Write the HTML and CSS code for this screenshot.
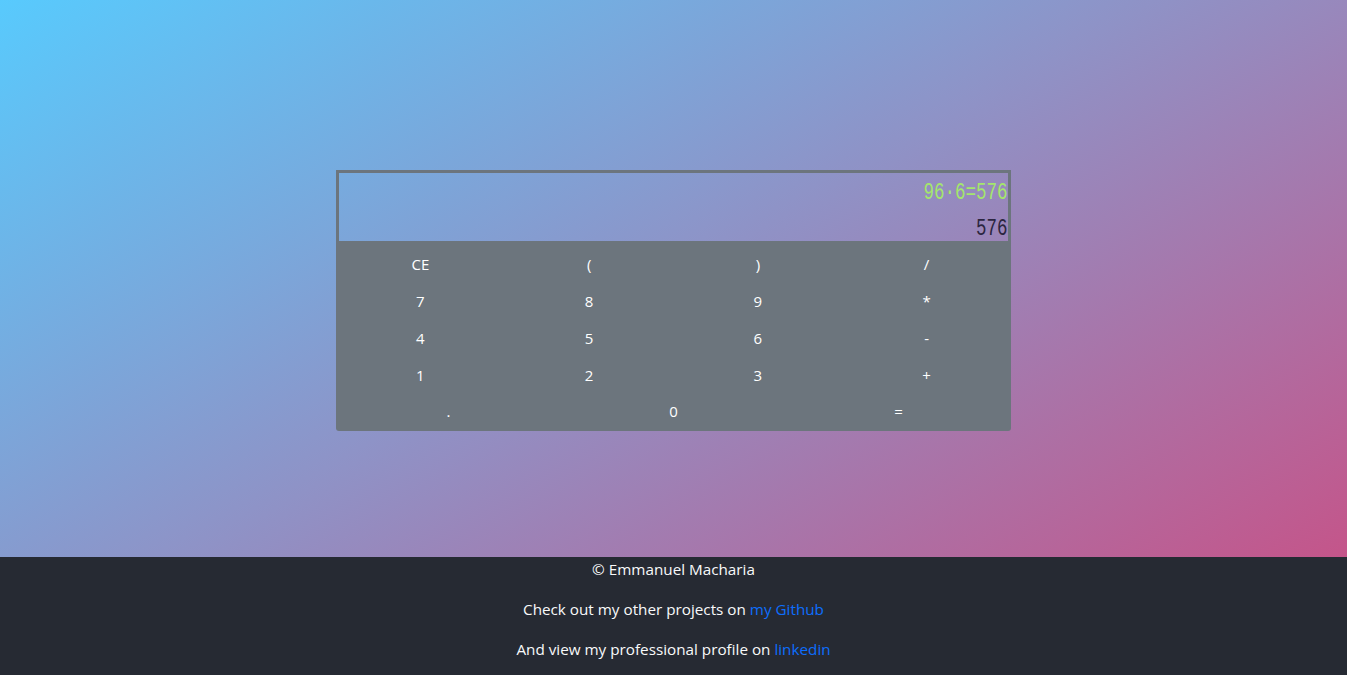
FILE: index.html
```html
<!DOCTYPE html>
<html lang="en">
<head>
<meta charset="utf-8">
<title>Calculator</title>
<link rel="stylesheet" href="styles.css">
</head>
<body>
<main class="stage">
  <section class="calc">
    <div class="display">
      <div class="line"><span class="digits history">96·6=576</span></div>
      <div class="line"><span class="digits result">576</span></div>
    </div>
    <div class="keypad">
      <div class="row four">
        <button class="key">CE</button>
        <button class="key">(</button>
        <button class="key">)</button>
        <button class="key">/</button>
      </div>
      <div class="row four">
        <button class="key">7</button>
        <button class="key">8</button>
        <button class="key">9</button>
        <button class="key">*</button>
      </div>
      <div class="row four">
        <button class="key">4</button>
        <button class="key">5</button>
        <button class="key">6</button>
        <button class="key">-</button>
      </div>
      <div class="row four">
        <button class="key">1</button>
        <button class="key">2</button>
        <button class="key">3</button>
        <button class="key">+</button>
      </div>
      <div class="row three">
        <button class="key">.</button>
        <button class="key">0</button>
        <button class="key">=</button>
      </div>
    </div>
  </section>
</main>
<footer class="footer">
  <p>© Emmanuel Macharia</p>
  <p>Check out my other projects on <a href="#">my Github</a></p>
  <p>And view my professional profile on <a href="#">linkedin</a></p>
</footer>
</body>
</html>
```
FILE: styles.css
```css
* { box-sizing: border-box; }
html, body { margin: 0; padding: 0; }
body {
  font-family: "Open Sans", "Noto Sans", sans-serif;
  font-size: 15px;
  color: #fff;
  background: #262a33;
}
.stage {
  height: 557px;
  background: linear-gradient(150deg, #58cafd 0%, #8f92c6 50%, #c4558a 100%);
  padding-top: 170px;
}
.calc {
  width: 675px;
  margin-left: 336px;
}
.display {
  border: 3px solid #6c757d;
  height: 74px;
  padding: 2px 1px 0 0;
  text-align: right;
  font-family: "Liberation Mono", "DejaVu Sans Mono", monospace;
  font-size: 23px;
  line-height: 36px;
}
.line { height: 36px; }
.digits {
  display: inline-block;
  transform: scaleX(0.76);
  transform-origin: right center;
}
.history { color: #a4e66c; }
.result { color: #2b2540; }
.keypad {
  background: #6c757d;
  padding-top: 2px;
  border-radius: 0 0 3px 3px;
  height: 187px;
}
.row {
  display: grid;
  height: 36.75px;
  align-items: center;
}
.four { grid-template-columns: repeat(4, 1fr); }
.three { grid-template-columns: repeat(3, 1fr); }
.key {
  background: none;
  border: 0;
  color: #fff;
  font: inherit;
  padding: 0;
  height: 36.75px;
  cursor: pointer;
}
.footer {
  height: 118px;
  text-align: center;
  color: #f8f9fa;
  font-size: 15.25px;
  line-height: 24px;
}
.footer p { margin: 0 0 16px; }
.footer a { color: #0d6efd; text-decoration: none; }
```
